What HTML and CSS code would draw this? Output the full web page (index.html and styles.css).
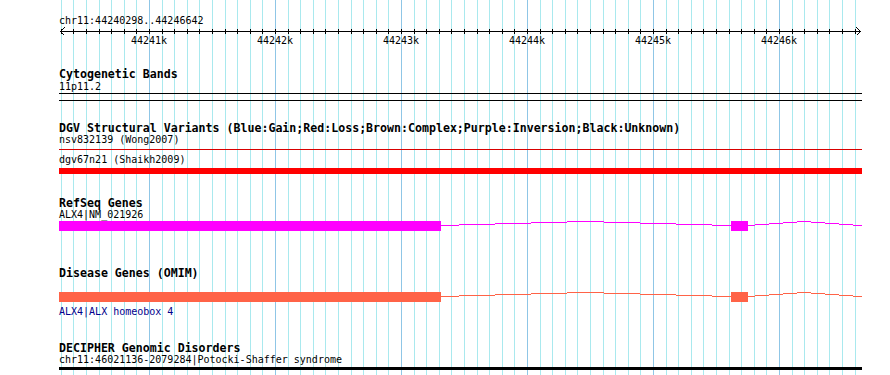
FILE: index.html
```html
<!DOCTYPE html>
<html lang="en">
<head>
  <meta charset="UTF-8" />
  <title>chr11:44240298..44246642</title>
  <link rel="stylesheet" href="styles.css">
</head>
<body>
  <div class="browser">
    <!-- 100bp grid behind all tracks -->
    <svg class="grid" width="890" height="375" shape-rendering="crispEdges">
      <path class="grid-minor" d="M61.5 0V375M73.5 0V375M86.5 0V375M99.5 0V375M111.5 0V375M124.5 0V375M136.5 0V375M162.5 0V375M174.5 0V375M187.5 0V375M199.5 0V375M212.5 0V375M225.5 0V375M237.5 0V375M250.5 0V375M262.5 0V375M288.5 0V375M300.5 0V375M313.5 0V375M325.5 0V375M338.5 0V375M351.5 0V375M363.5 0V375M376.5 0V375M388.5 0V375M414.5 0V375M426.5 0V375M439.5 0V375M451.5 0V375M464.5 0V375M477.5 0V375M489.5 0V375M502.5 0V375M514.5 0V375M540.5 0V375M552.5 0V375M565.5 0V375M577.5 0V375M590.5 0V375M603.5 0V375M615.5 0V375M628.5 0V375M640.5 0V375M666.5 0V375M678.5 0V375M691.5 0V375M703.5 0V375M716.5 0V375M729.5 0V375M741.5 0V375M754.5 0V375M766.5 0V375M792.5 0V375M804.5 0V375M817.5 0V375M829.5 0V375M842.5 0V375M855.5 0V375"/>
      <path class="grid-major" d="M149.5 0V375M275.5 0V375M401.5 0V375M527.5 0V375M653.5 0V375M779.5 0V375"/>
    </svg>

    <div class="ruler">
      <div class="small ruler-label">chr11:44240298..44246642</div>
      <svg class="axis" width="890" height="24" shape-rendering="crispEdges">
        <path class="axis-line" d="M60 4.5H861M60.5 4.5L64.5 0.5M60.5 4.5L64.5 8.5M860.5 4.5L856.5 0.5M860.5 4.5L856.5 8.5"/>
        <path class="axis-line" d="M61.5 2V7M73.5 2V7M86.5 2V7M99.5 2V7M111.5 2V7M124.5 2V7M136.5 2V7M149.5 2V7M162.5 2V7M174.5 2V7M187.5 2V7M199.5 2V7M212.5 2V7M225.5 2V7M237.5 2V7M250.5 2V7M262.5 2V7M275.5 2V7M288.5 2V7M300.5 2V7M313.5 2V7M325.5 2V7M338.5 2V7M351.5 2V7M363.5 2V7M376.5 2V7M388.5 2V7M401.5 2V7M414.5 2V7M426.5 2V7M439.5 2V7M451.5 2V7M464.5 2V7M477.5 2V7M489.5 2V7M502.5 2V7M514.5 2V7M527.5 2V7M540.5 2V7M552.5 2V7M565.5 2V7M577.5 2V7M590.5 2V7M603.5 2V7M615.5 2V7M628.5 2V7M640.5 2V7M653.5 2V7M666.5 2V7M678.5 2V7M691.5 2V7M703.5 2V7M716.5 2V7M729.5 2V7M741.5 2V7M754.5 2V7M766.5 2V7M779.5 2V7M792.5 2V7M804.5 2V7M817.5 2V7M829.5 2V7M842.5 2V7M855.5 2V7"/>
        <text class="tick-label" x="149" y="17">44241k</text>
        <text class="tick-label" x="275" y="17">44242k</text>
        <text class="tick-label" x="401" y="17">44243k</text>
        <text class="tick-label" x="527" y="17">44244k</text>
        <text class="tick-label" x="653" y="17">44245k</text>
        <text class="tick-label" x="779" y="17">44246k</text>
      </svg>
    </div>

    <section class="track track-bands">
      <h2 class="title">Cytogenetic Bands</h2>
      <div class="small label label-bands">11p11.2</div>
      <svg class="glyph" width="890" height="8" shape-rendering="crispEdges">
        <path class="band" d="M59 0.5H862M59 7.5H862"/>
      </svg>
    </section>

    <section class="track track-dgv">
      <h2 class="title">DGV Structural Variants (Blue:Gain;Red:Loss;Brown:Complex;Purple:Inversion;Black:Unknown)</h2>
      <div class="small label">nsv832139 (Wong2007)</div>
      <svg class="glyph" width="890" height="4" shape-rendering="crispEdges">
        <path class="sv-thin" d="M59 3.5H862"/>
      </svg>
      <div class="small label label-sv2">dgv67n21 (Shaikh2009)</div>
      <svg class="glyph" width="890" height="8" shape-rendering="crispEdges">
        <rect class="sv-loss" x="59" y="2" width="803" height="6"/>
      </svg>
    </section>

    <section class="track track-refseq">
      <h2 class="title">RefSeq Genes</h2>
      <div class="small label">ALX4|NM_021926</div>
      <svg class="glyph" width="890" height="11" shape-rendering="crispEdges">
        <rect class="exon-refseq" x="59" y="0" width="382" height="10"/>
        <rect class="exon-refseq" x="731" y="0" width="17" height="10"/>
        <path class="intron-refseq" d="M441 4.5H459M459 3.5H495M495 2.5H531M531 1.5H567M567 0.5H604M604 1.5H640M640 2.5H676M676 3.5H712M712 4.5H731M748 4.5H755M755 3.5H769M769 2.5H783M783 1.5H797M797 0.5H811M811 1.5H825M825 2.5H839M839 3.5H853M853 4.5H862"/>
      </svg>
    </section>

    <section class="track track-omim">
      <h2 class="title">Disease Genes (OMIM)</h2>
      <svg class="glyph glyph-omim" width="890" height="11" shape-rendering="crispEdges">
        <rect class="exon-omim" x="59" y="0" width="382" height="10"/>
        <rect class="exon-omim" x="731" y="0" width="17" height="10"/>
        <path class="intron-omim" d="M441 4.5H459M459 3.5H495M495 2.5H531M531 1.5H567M567 0.5H604M604 1.5H640M640 2.5H676M676 3.5H712M712 4.5H731M748 4.5H755M755 3.5H769M769 2.5H783M783 1.5H797M797 0.5H811M811 1.5H825M825 2.5H839M839 3.5H853M853 4.5H862"/>
      </svg>
      <div class="small label label-omim">ALX4|ALX homeobox 4</div>
    </section>

    <section class="track track-decipher">
      <h2 class="title">DECIPHER Genomic Disorders</h2>
      <div class="small label">chr11:46021136-2079284|Potocki-Shaffer syndrome</div>
      <svg class="glyph" width="890" height="4" shape-rendering="crispEdges">
        <rect class="disorder" x="59" y="1" width="803" height="3"/>
      </svg>
    </section>
  </div>
</body>
</html>
```

FILE: styles.css
```css
body {
  margin: 0;
  padding: 0;
  background: #fff;
  font-family: 'DejaVu Sans Mono', monospace;
  color: #000;
}
.browser {
  position: relative;
  z-index: 0;
  width: 890px;
  height: 375px;
  overflow: hidden;
  background: #fff;
}
.grid {
  position: absolute;
  top: 0;
  left: 0;
  z-index: -1;
}
.grid-minor {
  stroke: #a9e9ee;
  stroke-width: 1;
}
.grid-major {
  stroke: #8fc6e6;
  stroke-width: 1;
}
svg {
  display: block;
}
.small {
  font-size: 10px;
  line-height: 12px;
  padding-left: 59px;
  white-space: nowrap;
}
.title {
  margin: 0;
  padding-left: 59px;
  font-size: 11.6px;
  line-height: 12px;
  font-weight: bold;
  white-space: nowrap;
}
.ruler-label {
  margin-top: 14px;
  line-height: 13px;
}
.axis-line {
  stroke: #000;
  stroke-width: 1;
  fill: none;
}
.tick-label {
  font-family: 'DejaVu Sans Mono', monospace;
  font-size: 10px;
  text-anchor: middle;
  fill: #000;
}
.track-bands {
  margin-top: 17px;
}
.label-bands {
  margin-top: 1px;
}
.band {
  stroke: #000;
  stroke-width: 1;
}
.track-dgv {
  margin-top: 21px;
}
.sv-thin {
  stroke: #d80000;
  stroke-width: 1;
}
.label-sv2 {
  margin-top: 4px;
}
.sv-loss {
  fill: #ff0000;
}
.track-refseq {
  margin-top: 23px;
}
.exon-refseq {
  fill: #ff00ff;
}
.intron-refseq {
  stroke: #ff00ff;
  stroke-width: 1;
  fill: none;
}
.track-omim {
  margin-top: 35px;
}
.glyph-omim {
  margin-top: 13px;
}
.exon-omim {
  fill: #ff6347;
}
.intron-omim {
  stroke: #ff6347;
  stroke-width: 1;
  fill: none;
}
.label-omim {
  margin-top: 3px;
  color: #00008b;
}
.track-decipher {
  margin-top: 24px;
}
.disorder {
  fill: #000;
}
```
